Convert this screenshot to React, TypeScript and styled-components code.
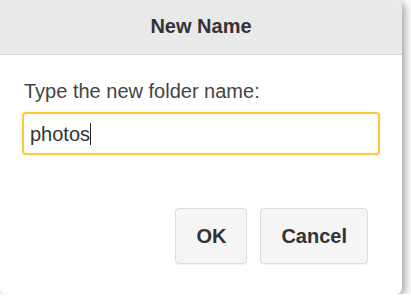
import React from "react";
import styled, { createGlobalStyle } from "styled-components";

const Global = createGlobalStyle`
  html, body { margin: 0; padding: 0; background: #ffffff; }
  body { font-family: "Liberation Sans", Arial, sans-serif; }
  * { box-sizing: border-box; }
`;

const Dialog = styled.div`
  width: 402px;
  height: 294px;
  background: #ffffff;
  border-radius: 0 6px 6px 6px;
  box-shadow: 3px 2px 8px rgba(0, 0, 0, 0.38);
  display: flex;
  flex-direction: column;
  overflow: hidden;
`;

const Header = styled.div`
  height: 55px;
  background: #e9e9e9;
  border-bottom: 1px solid #d6d6d6;
  display: flex;
  justify-content: center;
  align-items: flex-start;
  padding-top: 14px;
  font-size: 20px;
  line-height: 24px;
  font-weight: bold;
  color: #333333;
`;

const Body = styled.div`
  flex: 1;
  display: flex;
  flex-direction: column;
  padding: 24px 22px 30px 22px;
`;

const Label = styled.div`
  font-size: 20px;
  line-height: 24px;
  color: #444444;
  padding-left: 2px;
`;

const Field = styled.div`
  margin-top: 9px;
  height: 43px;
  width: 358px;
  border: 2px solid #fccb37;
  border-radius: 4px;
  box-shadow: 0 0 1px rgba(0, 0, 0, 0.25);
  display: flex;
  align-items: center;
  padding: 1px 0 0 6px;
  font-size: 20px;
  color: #333333;
`;

const Caret = styled.span`
  display: inline-block;
  width: 1px;
  height: 22px;
  background: #222222;
  margin-left: 0px;
  align-self: center;
`;

const Actions = styled.div`
  margin-top: auto;
  display: flex;
  justify-content: flex-end;
  gap: 13px;
  padding-right: 12px;
`;

const Button = styled.button`
  height: 56px;
  padding: 0 20px;
  border: 1px solid #dcdcdc;
  border-radius: 4px;
  background: #f5f5f5;
  font-family: "Liberation Sans", Arial, sans-serif;
  font-size: 20px;
  font-weight: bold;
  color: #333333;
  box-shadow: 0 1px 1px rgba(0, 0, 0, 0.06);
`;

export default function App() {
  return (
    <>
      <Global />
      <Dialog>
        <Header>New Name</Header>
        <Body>
          <Label>Type the new folder name:</Label>
          <Field>
            photos
            <Caret />
          </Field>
          <Actions>
            <Button>OK</Button>
            <Button>Cancel</Button>
          </Actions>
        </Body>
      </Dialog>
    </>
  );
}
